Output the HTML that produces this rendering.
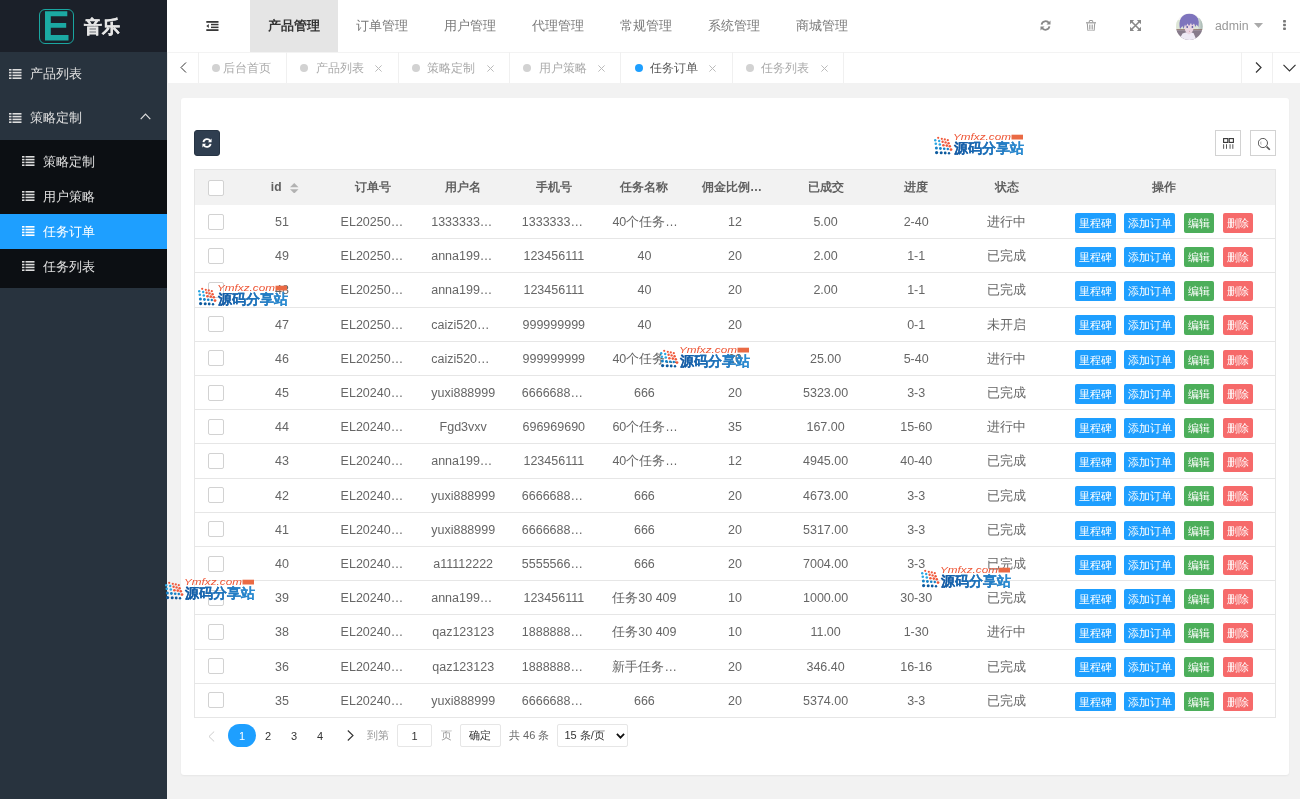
<!DOCTYPE html>
<html><head><meta charset="utf-8">
<style>
*{margin:0;padding:0;box-sizing:border-box;}
html,body{width:1300px;height:799px;overflow:hidden;background:#f2f2f2;font-family:"Liberation Sans",sans-serif;color:#666;}
div,span{position:absolute;}
svg{position:absolute;display:block;}
#side{left:0;top:0;width:167px;height:799px;background:#28333e;}
#logo{left:0;top:0;width:167px;height:52px;background:#1b2029;}
#lbox{left:38.5px;top:9px;width:35.5px;height:35px;border:1px solid #1aa6a0;border-radius:6px;}
#ltxt{left:84px;top:13.5px;font-size:17.5px;font-weight:bold;color:#e6e6e6;-webkit-text-stroke:0.3px #e6e6e6;line-height:26px;white-space:nowrap;}
.mi{left:0;width:167px;height:44px;color:#e0e0e0;font-size:13px;line-height:44px;white-space:nowrap;}
.mi .t{left:30px;top:0;}
.mi svg{left:8.5px;top:16.5px;}
#sub{left:0;top:140px;width:167px;height:148px;background:#0c0f13;}
.si{left:0;width:167px;height:35px;color:#e0e0e0;font-size:13px;line-height:35px;white-space:nowrap;}
.si .t{left:43px;top:0;}
.si svg{left:22px;top:12px;}
.si.act{background:#1e9fff;color:#fff;}
#head{left:167px;top:0;width:1133px;height:52px;background:#fff;}
.hm{top:0;height:52px;width:88px;text-align:center;line-height:52.5px;font-size:12.8px;color:#7a7a7a;white-space:nowrap;}
.hm.act{background:#e5e5e5;color:#333;font-weight:bold;}
#tabs{left:167px;top:52px;width:1133px;height:31px;background:#fff;border-top:1px solid #f3f3f3;}
.tb{top:52px;height:31px;border-left:1px solid #f0f0f0;font-size:12.4px;color:#aaa;line-height:32px;white-space:nowrap;}
.tb .dot{top:12px;width:8px;height:8px;border-radius:50%;background:#d2d2d2;}
.tb .x{top:12px;}
#card{left:181px;top:98px;width:1108px;height:677px;background:#fff;border-radius:3px;box-shadow:0 1px 2px rgba(0,0,0,.05);}
.th{height:35px;line-height:37px;text-align:center;font-size:12px;color:#606060;font-weight:bold;white-space:nowrap;}
.td{height:34.2px;line-height:36.4px;text-align:center;font-size:12.5px;color:#666;white-space:nowrap;}
#thead{left:194px;top:169px;width:1082px;height:36px;background:#f2f2f2;border:1px solid #e6e6e6;border-bottom:none;}
#tframe{left:194px;top:169px;width:1082px;height:549px;border:1px solid #e6e6e6;}
.rl{left:194px;width:1082px;height:1px;background:#e6e6e6;}
.cb{width:16px;height:16px;border:1px solid #d2d2d2;border-radius:2px;background:#fff;}
.sort{left:0;top:0;}
.ops{left:0;top:0;width:0;height:0;}
.b{top:0;height:19.8px;line-height:20px;font-size:10.8px;font-weight:normal;color:#fff;text-align:center;border-radius:2px;white-space:nowrap;}
.bl{background:#1e9fff;}
.gr{background:#4cae5a;}
.rd{background:#f66a6a;}
.wm{width:92px;height:25px;}
</style></head>
<body style="will-change:transform">
<div id="side">
  <div id="logo">
    <div id="lbox"></div>
    <svg style="left:45px;top:11px" width="24" height="30" viewBox="0 0 24 30"><path d="M0 0.2H22.3V5.2H5.8V12H21.2V16.7H5.8V24H23.5V29.4H0Z" fill="#1ba9a3"/></svg>
    <div id="ltxt">音乐</div>
  </div>
  <div class="mi" style="top:52px"><svg width="13" height="10" viewBox="0 0 13 10"><g fill="#ddd"><rect x="0" y="0" width="2.5" height="1.6"/><rect x="3.5" y="0" width="9" height="1.6"/><rect x="0" y="2.8" width="2.5" height="1.6"/><rect x="3.5" y="2.8" width="9" height="1.6"/><rect x="0" y="5.6" width="2.5" height="1.6"/><rect x="3.5" y="5.6" width="9" height="1.6"/><rect x="0" y="8.4" width="2.5" height="1.6"/><rect x="3.5" y="8.4" width="9" height="1.6"/></g></svg><span class="t">产品列表</span></div>
  <div class="mi" style="top:96px"><svg width="13" height="10" viewBox="0 0 13 10"><g fill="#ddd"><rect x="0" y="0" width="2.5" height="1.6"/><rect x="3.5" y="0" width="9" height="1.6"/><rect x="0" y="2.8" width="2.5" height="1.6"/><rect x="3.5" y="2.8" width="9" height="1.6"/><rect x="0" y="5.6" width="2.5" height="1.6"/><rect x="3.5" y="5.6" width="9" height="1.6"/><rect x="0" y="8.4" width="2.5" height="1.6"/><rect x="3.5" y="8.4" width="9" height="1.6"/></g></svg><span class="t">策略定制</span>
    <svg style="left:139.5px;top:17px" width="11" height="7" viewBox="0 0 11 7"><path d="M0.7 6.2L5.5 1.2L10.3 6.2" fill="none" stroke="#ddd" stroke-width="1.2"/></svg>
  </div>
  <div id="sub">
    <div class="si" style="top:4px"><svg width="13" height="10" viewBox="0 0 13 10"><g fill="#ddd"><rect x="0" y="0" width="2.5" height="1.6"/><rect x="3.5" y="0" width="9" height="1.6"/><rect x="0" y="2.8" width="2.5" height="1.6"/><rect x="3.5" y="2.8" width="9" height="1.6"/><rect x="0" y="5.6" width="2.5" height="1.6"/><rect x="3.5" y="5.6" width="9" height="1.6"/><rect x="0" y="8.4" width="2.5" height="1.6"/><rect x="3.5" y="8.4" width="9" height="1.6"/></g></svg><span class="t">策略定制</span></div>
    <div class="si" style="top:39px"><svg width="13" height="10" viewBox="0 0 13 10"><g fill="#ddd"><rect x="0" y="0" width="2.5" height="1.6"/><rect x="3.5" y="0" width="9" height="1.6"/><rect x="0" y="2.8" width="2.5" height="1.6"/><rect x="3.5" y="2.8" width="9" height="1.6"/><rect x="0" y="5.6" width="2.5" height="1.6"/><rect x="3.5" y="5.6" width="9" height="1.6"/><rect x="0" y="8.4" width="2.5" height="1.6"/><rect x="3.5" y="8.4" width="9" height="1.6"/></g></svg><span class="t">用户策略</span></div>
    <div class="si act" style="top:74px"><svg width="13" height="10" viewBox="0 0 13 10"><g fill="#fff"><rect x="0" y="0" width="2.5" height="1.6"/><rect x="3.5" y="0" width="9" height="1.6"/><rect x="0" y="2.8" width="2.5" height="1.6"/><rect x="3.5" y="2.8" width="9" height="1.6"/><rect x="0" y="5.6" width="2.5" height="1.6"/><rect x="3.5" y="5.6" width="9" height="1.6"/><rect x="0" y="8.4" width="2.5" height="1.6"/><rect x="3.5" y="8.4" width="9" height="1.6"/></g></svg><span class="t">任务订单</span></div>
    <div class="si" style="top:109px"><svg width="13" height="10" viewBox="0 0 13 10"><g fill="#ddd"><rect x="0" y="0" width="2.5" height="1.6"/><rect x="3.5" y="0" width="9" height="1.6"/><rect x="0" y="2.8" width="2.5" height="1.6"/><rect x="3.5" y="2.8" width="9" height="1.6"/><rect x="0" y="5.6" width="2.5" height="1.6"/><rect x="3.5" y="5.6" width="9" height="1.6"/><rect x="0" y="8.4" width="2.5" height="1.6"/><rect x="3.5" y="8.4" width="9" height="1.6"/></g></svg><span class="t">任务列表</span></div>
  </div>
</div>

<div id="head">
  <svg style="left:38.5px;top:21px" width="13" height="10" viewBox="0 0 13 10"><g fill="#383838"><rect x="0.3" y="0" width="12.2" height="1.8"/><rect x="5" y="2.8" width="7.5" height="1.5"/><rect x="5" y="5.6" width="7.5" height="1.5"/><rect x="0.3" y="8.2" width="12.2" height="1.8"/><path d="M2.8 3L0.3 5L2.8 7Z"/></g></svg>
  <div class="hm act" style="left:83px">产品管理</div>
  <div class="hm" style="left:171px">订单管理</div>
  <div class="hm" style="left:259px">用户管理</div>
  <div class="hm" style="left:347px">代理管理</div>
  <div class="hm" style="left:435px">常规管理</div>
  <div class="hm" style="left:523px">系统管理</div>
  <div class="hm" style="left:611px">商城管理</div>
  <!-- refresh -->
  <svg style="left:873px;top:19.5px" width="11" height="11" viewBox="0 0 11 11"><g fill="none" stroke="#888" stroke-width="1.8"><path d="M1.6 4.6A4 4 0 0 1 9 3.2"/><path d="M9.4 6.4A4 4 0 0 1 2 7.8"/></g><path d="M10.5 0.6V4.6H6.5Z" fill="#888"/><path d="M0.5 10.4V6.4H4.5Z" fill="#888"/></svg>
  <!-- trash -->
  <svg style="left:918.5px;top:19.5px" width="10" height="11.5" viewBox="0 0 10 11.5"><g fill="none" stroke="#999" stroke-width="1"><path d="M3.3 2.2V0.9Q3.3 0.5 3.8 0.5H6.2Q6.7 0.5 6.7 0.9V2.2"/><path d="M1.3 3.3L1.8 10.3Q1.9 11 2.6 11H7.4Q8.1 11 8.2 10.3L8.7 3.3"/></g><rect x="0" y="2.2" width="10" height="1.2" fill="#999"/><g fill="#aaa"><rect x="3" y="4.6" width="0.9" height="5"/><rect x="4.55" y="4.6" width="0.9" height="5"/><rect x="6.1" y="4.6" width="0.9" height="5"/></g></svg>
  <!-- fullscreen -->
  <svg style="left:963px;top:19.5px" width="11" height="11" viewBox="0 0 11 11"><g fill="#888"><path d="M0 0H4.2L0 4.2Z"/><path d="M11 0H6.8L11 4.2Z"/><path d="M0 11H4.2L0 6.8Z"/><path d="M11 11H6.8L11 6.8Z"/></g><g stroke="#888" stroke-width="1.6"><path d="M1.5 1.5L9.5 9.5M9.5 1.5L1.5 9.5"/></g></svg>
  <!-- avatar -->
  <svg style="left:1009.2px;top:12.6px" width="27" height="27" viewBox="0 0 27 27"><defs><clipPath id="avc"><circle cx="13.3" cy="13.6" r="13.3"/></clipPath><linearGradient id="avr" x1="0" x2="1"><stop offset="0" stop-color="#e4ebe0"/><stop offset="1" stop-color="#9fb0ae"/></linearGradient></defs><g clip-path="url(#avc)"><rect width="27" height="27" fill="#f6f6f4"/><rect y="7" width="27" height="9.5" fill="#dde6d6"/><rect x="21" y="5" width="6" height="11.5" fill="url(#avr)"/><rect y="16.3" width="27" height="0.9" fill="#7d5b52"/><rect y="17.2" width="27" height="10" fill="#877b8b"/><path d="M3 27L6.5 20.5Q12 18.5 17.5 20L20.5 27Z" fill="#eeeaf5"/><path d="M8.5 11Q8 20 13 21.5Q17.5 20.5 18.5 11Z" fill="#ead5e2"/><path d="M4 16Q2.5 9 5 5Q8.5 0.5 13.5 0.8Q19.5 1 22 5.5Q23.5 9 22.5 14L20.5 11.5L19.5 14L18 10.5L16 12.5L15 10L13 13L11.5 10.5L10 13.5L9 11.5L7.5 16L6.5 13Z" fill="#7e74bd"/><circle cx="11.2" cy="14" r="0.9" fill="#5d5fa0"/><circle cx="16.4" cy="14" r="0.9" fill="#5d5fa0"/><path d="M13.2 18.2L14 18.6" stroke="#c77b8a" stroke-width="0.7"/></g></svg>
  <span style="left:1048px;top:0;line-height:52px;font-size:12.3px;color:#999;">admin</span>
  <svg style="left:1086.5px;top:23px" width="9" height="5" viewBox="0 0 9 5"><path d="M0 0H9L4.5 5Z" fill="#aaa"/></svg>
  <svg style="left:1116px;top:20px" width="3" height="10" viewBox="0 0 3 10"><g fill="#777"><rect x="0.1" y="0.1" width="2.8" height="2.4" rx="0.6"/><rect x="0.1" y="3.8" width="2.8" height="2.4" rx="0.6"/><rect x="0.1" y="7.5" width="2.8" height="2.4" rx="0.6"/></g></svg>
</div>

<div id="tabs"></div>
<div class="tb" style="left:167px;width:32px;"><svg style="left:11.8px;top:10px" width="7" height="11" viewBox="0 0 7 11"><path d="M6 0.5L1 5.5L6 10.5" fill="none" stroke="#333" stroke-width="1"/></svg></div>
<div class="tb" style="left:198px;width:88px;"><span class="dot" style="left:12.8px"></span><span style="left:24.2px">后台首页</span></div>
<div class="tb" style="left:286px;width:111.5px;"><span class="dot" style="left:13.2px"></span><span style="left:28.9px">产品列表</span><svg class="x" style="left:88px;top:12.8px" width="7" height="7" viewBox="0 0 7 7"><path d="M0.4 0.4L6.6 6.6M6.6 0.4L0.4 6.6" stroke="#bbb" stroke-width="1"/></svg></div>
<div class="tb" style="left:397.5px;width:111.5px;"><span class="dot" style="left:13.2px"></span><span style="left:28.9px">策略定制</span><svg class="x" style="left:88px;top:12.8px" width="7" height="7" viewBox="0 0 7 7"><path d="M0.4 0.4L6.6 6.6M6.6 0.4L0.4 6.6" stroke="#bbb" stroke-width="1"/></svg></div>
<div class="tb" style="left:509px;width:111.5px;"><span class="dot" style="left:13.2px"></span><span style="left:28.9px">用户策略</span><svg class="x" style="left:88px;top:12.8px" width="7" height="7" viewBox="0 0 7 7"><path d="M0.4 0.4L6.6 6.6M6.6 0.4L0.4 6.6" stroke="#bbb" stroke-width="1"/></svg></div>
<div class="tb" style="left:620.3px;width:111.5px;color:#555;"><span class="dot" style="left:14.2px;background:#1e9fff"></span><span style="left:28.9px">任务订单</span><svg class="x" style="left:88px;top:12.8px" width="7" height="7" viewBox="0 0 7 7"><path d="M0.4 0.4L6.6 6.6M6.6 0.4L0.4 6.6" stroke="#bbb" stroke-width="1"/></svg></div>
<div class="tb" style="left:731.6px;width:111.5px;"><span class="dot" style="left:13.2px"></span><span style="left:28.9px">任务列表</span><svg class="x" style="left:88px;top:12.8px" width="7" height="7" viewBox="0 0 7 7"><path d="M0.4 0.4L6.6 6.6M6.6 0.4L0.4 6.6" stroke="#bbb" stroke-width="1"/></svg></div>
<div class="tb" style="left:843px;width:1px;"></div>
<div class="tb" style="left:1241px;width:31px;"><svg style="left:13px;top:10px" width="7" height="11" viewBox="0 0 7 11"><path d="M1 0.5L6 5.5L1 10.5" fill="none" stroke="#333" stroke-width="1.2"/></svg></div>
<div class="tb" style="left:1272px;width:28px;"><svg style="left:9.5px;top:11.5px" width="13" height="8" viewBox="0 0 13 8"><path d="M0.5 0.8L6.5 6.8L12.5 0.8" fill="none" stroke="#333" stroke-width="1.2"/></svg></div>

<div id="card"></div>
<div style="left:194px;top:130px;width:26px;height:26px;background:#2f3e50;border:1px solid #263444;border-radius:3px;"><svg style="left:7px;top:7px" width="10" height="10" viewBox="0 0 11 11"><g fill="none" stroke="#fff" stroke-width="2"><path d="M1.6 4.6A4 4 0 0 1 9 3.2"/><path d="M9.4 6.4A4 4 0 0 1 2 7.8"/></g><path d="M10.5 0.6V4.6H6.5Z" fill="#fff"/><path d="M0.5 10.4V6.4H4.5Z" fill="#fff"/></svg></div>
<div style="left:1215px;top:130px;width:26px;height:26px;border:1px solid #d2d2d2;"><svg style="left:7px;top:7px" width="11" height="11" viewBox="0 0 11 11"><g fill="none" stroke="#333" stroke-width="1.1"><rect x="0.6" y="0.6" width="4.2" height="3.8"/><rect x="6.2" y="0.6" width="4.2" height="3.8"/></g><g fill="#444"><rect x="0.2" y="6.2" width="0.9" height="4.6"/><rect x="3" y="6.2" width="0.9" height="4.6"/><rect x="6.6" y="6.2" width="0.9" height="4.6"/><rect x="9.4" y="6.2" width="0.9" height="4.6"/></g></svg></div>
<div style="left:1250px;top:130px;width:26px;height:26px;border:1px solid #d2d2d2;"><svg style="left:6.5px;top:6.5px" width="13" height="13" viewBox="0 0 13 13"><circle cx="4.9" cy="5.0" r="4.6" fill="none" stroke="#444" stroke-width="0.9"/><path d="M3 3.6Q2.3 5 3.2 6.6" fill="none" stroke="#777" stroke-width="0.6"/><path d="M8.6 8.6L11.8 11.8" stroke="#555" stroke-width="1.6"/></svg></div>
<div id="tframe"></div>
<div id="thead"></div>
<div class="cb" style="left:208px;top:180px"></div>
<span class="th" style="left:270.8px;top:169px;font-weight:bold;font-family:'Liberation Sans'">id</span>
<svg style="left:290px;top:182.5px" width="8.5" height="10.5" viewBox="0 0 8.5 10.5"><path d="M4.25 0L8.5 4.2H0Z" fill="#b2b2b2"/><path d="M0 6.2H8.5L4.25 10.5Z" fill="#b2b2b2"/></svg>
<div class="th" style="left:327.3px;top:169px;width:90.6px">订单号</div>
<div class="th" style="left:417.9px;top:169px;width:90.6px">用户名</div>
<div class="th" style="left:508.5px;top:169px;width:90.6px">手机号</div>
<div class="th" style="left:599.1px;top:169px;width:90.6px">任务名称</div>
<div class="th" style="left:702.0px;top:169px;text-align:left">佣金比例…</div>
<div class="th" style="left:780.3px;top:169px;width:90.6px">已成交</div>
<div class="th" style="left:870.9px;top:169px;width:90.6px">进度</div>
<div class="th" style="left:961.5px;top:169px;width:90.6px">状态</div>
<div class="th" style="left:1052.1px;top:169px;width:223.9px">操作</div>
<div class="rl" style="top:238px"></div>
<div class="cb" style="left:208px;top:213.5px"></div>
<div class="td" style="left:236.7px;top:204.0px;width:90.6px">51</div>
<div class="td" style="left:340.6px;top:204.0px;text-align:left">EL20250…</div>
<div class="td" style="left:431.2px;top:204.0px;text-align:left">1333333…</div>
<div class="td" style="left:521.8px;top:204.0px;text-align:left">1333333…</div>
<div class="td" style="left:612.4px;top:204.0px;text-align:left">40个任务…</div>
<div class="td" style="left:689.7px;top:204.0px;width:90.6px">12</div>
<div class="td" style="left:780.3px;top:204.0px;width:90.6px">5.00</div>
<div class="td" style="left:870.9px;top:204.0px;width:90.6px">2-40</div>
<div class="td" style="left:961.5px;top:204.0px;width:90.6px">进行中</div>
<div class="ops" style="top:212.8px"><span class="b bl" style="left:1075px;width:40.5px">里程碑</span><span class="b bl" style="left:1124px;width:51px">添加订单</span><span class="b gr" style="left:1184px;width:30px">编辑</span><span class="b rd" style="left:1223px;width:29.7px">删除</span></div>
<div class="rl" style="top:272px"></div>
<div class="cb" style="left:208px;top:247.7px"></div>
<div class="td" style="left:236.7px;top:238.2px;width:90.6px">49</div>
<div class="td" style="left:340.6px;top:238.2px;text-align:left">EL20250…</div>
<div class="td" style="left:431.2px;top:238.2px;text-align:left">anna199…</div>
<div class="td" style="left:508.5px;top:238.2px;width:90.6px">123456111</div>
<div class="td" style="left:599.1px;top:238.2px;width:90.6px">40</div>
<div class="td" style="left:689.7px;top:238.2px;width:90.6px">20</div>
<div class="td" style="left:780.3px;top:238.2px;width:90.6px">2.00</div>
<div class="td" style="left:870.9px;top:238.2px;width:90.6px">1-1</div>
<div class="td" style="left:961.5px;top:238.2px;width:90.6px">已完成</div>
<div class="ops" style="top:247.0px"><span class="b bl" style="left:1075px;width:40.5px">里程碑</span><span class="b bl" style="left:1124px;width:51px">添加订单</span><span class="b gr" style="left:1184px;width:30px">编辑</span><span class="b rd" style="left:1223px;width:29.7px">删除</span></div>
<div class="rl" style="top:307px"></div>
<div class="cb" style="left:208px;top:281.9px"></div>
<div class="td" style="left:236.7px;top:272.4px;width:90.6px">48</div>
<div class="td" style="left:340.6px;top:272.4px;text-align:left">EL20250…</div>
<div class="td" style="left:431.2px;top:272.4px;text-align:left">anna199…</div>
<div class="td" style="left:508.5px;top:272.4px;width:90.6px">123456111</div>
<div class="td" style="left:599.1px;top:272.4px;width:90.6px">40</div>
<div class="td" style="left:689.7px;top:272.4px;width:90.6px">20</div>
<div class="td" style="left:780.3px;top:272.4px;width:90.6px">2.00</div>
<div class="td" style="left:870.9px;top:272.4px;width:90.6px">1-1</div>
<div class="td" style="left:961.5px;top:272.4px;width:90.6px">已完成</div>
<div class="ops" style="top:281.2px"><span class="b bl" style="left:1075px;width:40.5px">里程碑</span><span class="b bl" style="left:1124px;width:51px">添加订单</span><span class="b gr" style="left:1184px;width:30px">编辑</span><span class="b rd" style="left:1223px;width:29.7px">删除</span></div>
<div class="rl" style="top:341px"></div>
<div class="cb" style="left:208px;top:316.1px"></div>
<div class="td" style="left:236.7px;top:306.6px;width:90.6px">47</div>
<div class="td" style="left:340.6px;top:306.6px;text-align:left">EL20250…</div>
<div class="td" style="left:431.2px;top:306.6px;text-align:left">caizi520…</div>
<div class="td" style="left:508.5px;top:306.6px;width:90.6px">999999999</div>
<div class="td" style="left:599.1px;top:306.6px;width:90.6px">40</div>
<div class="td" style="left:689.7px;top:306.6px;width:90.6px">20</div>
<div class="td" style="left:780.3px;top:306.6px;width:90.6px"></div>
<div class="td" style="left:870.9px;top:306.6px;width:90.6px">0-1</div>
<div class="td" style="left:961.5px;top:306.6px;width:90.6px">未开启</div>
<div class="ops" style="top:315.4px"><span class="b bl" style="left:1075px;width:40.5px">里程碑</span><span class="b bl" style="left:1124px;width:51px">添加订单</span><span class="b gr" style="left:1184px;width:30px">编辑</span><span class="b rd" style="left:1223px;width:29.7px">删除</span></div>
<div class="rl" style="top:375px"></div>
<div class="cb" style="left:208px;top:350.3px"></div>
<div class="td" style="left:236.7px;top:340.8px;width:90.6px">46</div>
<div class="td" style="left:340.6px;top:340.8px;text-align:left">EL20250…</div>
<div class="td" style="left:431.2px;top:340.8px;text-align:left">caizi520…</div>
<div class="td" style="left:508.5px;top:340.8px;width:90.6px">999999999</div>
<div class="td" style="left:612.4px;top:340.8px;text-align:left">40个任务…</div>
<div class="td" style="left:689.7px;top:340.8px;width:90.6px">20</div>
<div class="td" style="left:780.3px;top:340.8px;width:90.6px">25.00</div>
<div class="td" style="left:870.9px;top:340.8px;width:90.6px">5-40</div>
<div class="td" style="left:961.5px;top:340.8px;width:90.6px">进行中</div>
<div class="ops" style="top:349.6px"><span class="b bl" style="left:1075px;width:40.5px">里程碑</span><span class="b bl" style="left:1124px;width:51px">添加订单</span><span class="b gr" style="left:1184px;width:30px">编辑</span><span class="b rd" style="left:1223px;width:29.7px">删除</span></div>
<div class="rl" style="top:409px"></div>
<div class="cb" style="left:208px;top:384.5px"></div>
<div class="td" style="left:236.7px;top:375.0px;width:90.6px">45</div>
<div class="td" style="left:340.6px;top:375.0px;text-align:left">EL20240…</div>
<div class="td" style="left:417.9px;top:375.0px;width:90.6px">yuxi888999</div>
<div class="td" style="left:521.8px;top:375.0px;text-align:left">6666688…</div>
<div class="td" style="left:599.1px;top:375.0px;width:90.6px">666</div>
<div class="td" style="left:689.7px;top:375.0px;width:90.6px">20</div>
<div class="td" style="left:780.3px;top:375.0px;width:90.6px">5323.00</div>
<div class="td" style="left:870.9px;top:375.0px;width:90.6px">3-3</div>
<div class="td" style="left:961.5px;top:375.0px;width:90.6px">已完成</div>
<div class="ops" style="top:383.8px"><span class="b bl" style="left:1075px;width:40.5px">里程碑</span><span class="b bl" style="left:1124px;width:51px">添加订单</span><span class="b gr" style="left:1184px;width:30px">编辑</span><span class="b rd" style="left:1223px;width:29.7px">删除</span></div>
<div class="rl" style="top:443px"></div>
<div class="cb" style="left:208px;top:418.7px"></div>
<div class="td" style="left:236.7px;top:409.2px;width:90.6px">44</div>
<div class="td" style="left:340.6px;top:409.2px;text-align:left">EL20240…</div>
<div class="td" style="left:417.9px;top:409.2px;width:90.6px">Fgd3vxv</div>
<div class="td" style="left:508.5px;top:409.2px;width:90.6px">696969690</div>
<div class="td" style="left:612.4px;top:409.2px;text-align:left">60个任务…</div>
<div class="td" style="left:689.7px;top:409.2px;width:90.6px">35</div>
<div class="td" style="left:780.3px;top:409.2px;width:90.6px">167.00</div>
<div class="td" style="left:870.9px;top:409.2px;width:90.6px">15-60</div>
<div class="td" style="left:961.5px;top:409.2px;width:90.6px">进行中</div>
<div class="ops" style="top:418.0px"><span class="b bl" style="left:1075px;width:40.5px">里程碑</span><span class="b bl" style="left:1124px;width:51px">添加订单</span><span class="b gr" style="left:1184px;width:30px">编辑</span><span class="b rd" style="left:1223px;width:29.7px">删除</span></div>
<div class="rl" style="top:478px"></div>
<div class="cb" style="left:208px;top:452.9px"></div>
<div class="td" style="left:236.7px;top:443.4px;width:90.6px">43</div>
<div class="td" style="left:340.6px;top:443.4px;text-align:left">EL20240…</div>
<div class="td" style="left:431.2px;top:443.4px;text-align:left">anna199…</div>
<div class="td" style="left:508.5px;top:443.4px;width:90.6px">123456111</div>
<div class="td" style="left:612.4px;top:443.4px;text-align:left">40个任务…</div>
<div class="td" style="left:689.7px;top:443.4px;width:90.6px">12</div>
<div class="td" style="left:780.3px;top:443.4px;width:90.6px">4945.00</div>
<div class="td" style="left:870.9px;top:443.4px;width:90.6px">40-40</div>
<div class="td" style="left:961.5px;top:443.4px;width:90.6px">已完成</div>
<div class="ops" style="top:452.2px"><span class="b bl" style="left:1075px;width:40.5px">里程碑</span><span class="b bl" style="left:1124px;width:51px">添加订单</span><span class="b gr" style="left:1184px;width:30px">编辑</span><span class="b rd" style="left:1223px;width:29.7px">删除</span></div>
<div class="rl" style="top:512px"></div>
<div class="cb" style="left:208px;top:487.1px"></div>
<div class="td" style="left:236.7px;top:477.6px;width:90.6px">42</div>
<div class="td" style="left:340.6px;top:477.6px;text-align:left">EL20240…</div>
<div class="td" style="left:417.9px;top:477.6px;width:90.6px">yuxi888999</div>
<div class="td" style="left:521.8px;top:477.6px;text-align:left">6666688…</div>
<div class="td" style="left:599.1px;top:477.6px;width:90.6px">666</div>
<div class="td" style="left:689.7px;top:477.6px;width:90.6px">20</div>
<div class="td" style="left:780.3px;top:477.6px;width:90.6px">4673.00</div>
<div class="td" style="left:870.9px;top:477.6px;width:90.6px">3-3</div>
<div class="td" style="left:961.5px;top:477.6px;width:90.6px">已完成</div>
<div class="ops" style="top:486.4px"><span class="b bl" style="left:1075px;width:40.5px">里程碑</span><span class="b bl" style="left:1124px;width:51px">添加订单</span><span class="b gr" style="left:1184px;width:30px">编辑</span><span class="b rd" style="left:1223px;width:29.7px">删除</span></div>
<div class="rl" style="top:546px"></div>
<div class="cb" style="left:208px;top:521.3px"></div>
<div class="td" style="left:236.7px;top:511.8px;width:90.6px">41</div>
<div class="td" style="left:340.6px;top:511.8px;text-align:left">EL20240…</div>
<div class="td" style="left:417.9px;top:511.8px;width:90.6px">yuxi888999</div>
<div class="td" style="left:521.8px;top:511.8px;text-align:left">6666688…</div>
<div class="td" style="left:599.1px;top:511.8px;width:90.6px">666</div>
<div class="td" style="left:689.7px;top:511.8px;width:90.6px">20</div>
<div class="td" style="left:780.3px;top:511.8px;width:90.6px">5317.00</div>
<div class="td" style="left:870.9px;top:511.8px;width:90.6px">3-3</div>
<div class="td" style="left:961.5px;top:511.8px;width:90.6px">已完成</div>
<div class="ops" style="top:520.6px"><span class="b bl" style="left:1075px;width:40.5px">里程碑</span><span class="b bl" style="left:1124px;width:51px">添加订单</span><span class="b gr" style="left:1184px;width:30px">编辑</span><span class="b rd" style="left:1223px;width:29.7px">删除</span></div>
<div class="rl" style="top:580px"></div>
<div class="cb" style="left:208px;top:555.5px"></div>
<div class="td" style="left:236.7px;top:546.0px;width:90.6px">40</div>
<div class="td" style="left:340.6px;top:546.0px;text-align:left">EL20240…</div>
<div class="td" style="left:417.9px;top:546.0px;width:90.6px">a11112222</div>
<div class="td" style="left:521.8px;top:546.0px;text-align:left">5555566…</div>
<div class="td" style="left:599.1px;top:546.0px;width:90.6px">666</div>
<div class="td" style="left:689.7px;top:546.0px;width:90.6px">20</div>
<div class="td" style="left:780.3px;top:546.0px;width:90.6px">7004.00</div>
<div class="td" style="left:870.9px;top:546.0px;width:90.6px">3-3</div>
<div class="td" style="left:961.5px;top:546.0px;width:90.6px">已完成</div>
<div class="ops" style="top:554.8px"><span class="b bl" style="left:1075px;width:40.5px">里程碑</span><span class="b bl" style="left:1124px;width:51px">添加订单</span><span class="b gr" style="left:1184px;width:30px">编辑</span><span class="b rd" style="left:1223px;width:29.7px">删除</span></div>
<div class="rl" style="top:614px"></div>
<div class="cb" style="left:208px;top:589.7px"></div>
<div class="td" style="left:236.7px;top:580.2px;width:90.6px">39</div>
<div class="td" style="left:340.6px;top:580.2px;text-align:left">EL20240…</div>
<div class="td" style="left:431.2px;top:580.2px;text-align:left">anna199…</div>
<div class="td" style="left:508.5px;top:580.2px;width:90.6px">123456111</div>
<div class="td" style="left:599.1px;top:580.2px;width:90.6px">任务30 409</div>
<div class="td" style="left:689.7px;top:580.2px;width:90.6px">10</div>
<div class="td" style="left:780.3px;top:580.2px;width:90.6px">1000.00</div>
<div class="td" style="left:870.9px;top:580.2px;width:90.6px">30-30</div>
<div class="td" style="left:961.5px;top:580.2px;width:90.6px">已完成</div>
<div class="ops" style="top:589.0px"><span class="b bl" style="left:1075px;width:40.5px">里程碑</span><span class="b bl" style="left:1124px;width:51px">添加订单</span><span class="b gr" style="left:1184px;width:30px">编辑</span><span class="b rd" style="left:1223px;width:29.7px">删除</span></div>
<div class="rl" style="top:649px"></div>
<div class="cb" style="left:208px;top:623.9px"></div>
<div class="td" style="left:236.7px;top:614.4px;width:90.6px">38</div>
<div class="td" style="left:340.6px;top:614.4px;text-align:left">EL20240…</div>
<div class="td" style="left:417.9px;top:614.4px;width:90.6px">qaz123123</div>
<div class="td" style="left:521.8px;top:614.4px;text-align:left">1888888…</div>
<div class="td" style="left:599.1px;top:614.4px;width:90.6px">任务30 409</div>
<div class="td" style="left:689.7px;top:614.4px;width:90.6px">10</div>
<div class="td" style="left:780.3px;top:614.4px;width:90.6px">11.00</div>
<div class="td" style="left:870.9px;top:614.4px;width:90.6px">1-30</div>
<div class="td" style="left:961.5px;top:614.4px;width:90.6px">进行中</div>
<div class="ops" style="top:623.2px"><span class="b bl" style="left:1075px;width:40.5px">里程碑</span><span class="b bl" style="left:1124px;width:51px">添加订单</span><span class="b gr" style="left:1184px;width:30px">编辑</span><span class="b rd" style="left:1223px;width:29.7px">删除</span></div>
<div class="rl" style="top:683px"></div>
<div class="cb" style="left:208px;top:658.1px"></div>
<div class="td" style="left:236.7px;top:648.6px;width:90.6px">36</div>
<div class="td" style="left:340.6px;top:648.6px;text-align:left">EL20240…</div>
<div class="td" style="left:417.9px;top:648.6px;width:90.6px">qaz123123</div>
<div class="td" style="left:521.8px;top:648.6px;text-align:left">1888888…</div>
<div class="td" style="left:612.4px;top:648.6px;text-align:left">新手任务…</div>
<div class="td" style="left:689.7px;top:648.6px;width:90.6px">20</div>
<div class="td" style="left:780.3px;top:648.6px;width:90.6px">346.40</div>
<div class="td" style="left:870.9px;top:648.6px;width:90.6px">16-16</div>
<div class="td" style="left:961.5px;top:648.6px;width:90.6px">已完成</div>
<div class="ops" style="top:657.4px"><span class="b bl" style="left:1075px;width:40.5px">里程碑</span><span class="b bl" style="left:1124px;width:51px">添加订单</span><span class="b gr" style="left:1184px;width:30px">编辑</span><span class="b rd" style="left:1223px;width:29.7px">删除</span></div>
<div class="rl" style="top:717px"></div>
<div class="cb" style="left:208px;top:692.3px"></div>
<div class="td" style="left:236.7px;top:682.8px;width:90.6px">35</div>
<div class="td" style="left:340.6px;top:682.8px;text-align:left">EL20240…</div>
<div class="td" style="left:417.9px;top:682.8px;width:90.6px">yuxi888999</div>
<div class="td" style="left:521.8px;top:682.8px;text-align:left">6666688…</div>
<div class="td" style="left:599.1px;top:682.8px;width:90.6px">666</div>
<div class="td" style="left:689.7px;top:682.8px;width:90.6px">20</div>
<div class="td" style="left:780.3px;top:682.8px;width:90.6px">5374.00</div>
<div class="td" style="left:870.9px;top:682.8px;width:90.6px">3-3</div>
<div class="td" style="left:961.5px;top:682.8px;width:90.6px">已完成</div>
<div class="ops" style="top:691.6px"><span class="b bl" style="left:1075px;width:40.5px">里程碑</span><span class="b bl" style="left:1124px;width:51px">添加订单</span><span class="b gr" style="left:1184px;width:30px">编辑</span><span class="b rd" style="left:1223px;width:29.7px">删除</span></div><!-- pagination -->
<svg style="left:208px;top:730.5px" width="7" height="11" viewBox="0 0 7 11"><path d="M6.2 0.5L1 5.5L6.2 10.5" fill="none" stroke="#ccc" stroke-width="1"/></svg>
<div style="left:228px;top:724px;width:28px;height:23px;border-radius:11.5px;background:#1e9fff;color:#fff;font-size:11px;line-height:24px;text-align:center;">1</div>
<span style="left:263px;top:724px;width:10px;text-align:center;line-height:24px;font-size:11px;color:#333;">2</span>
<span style="left:289px;top:724px;width:10px;text-align:center;line-height:24px;font-size:11px;color:#333;">3</span>
<span style="left:315px;top:724px;width:10px;text-align:center;line-height:24px;font-size:11px;color:#333;">4</span>
<svg style="left:347px;top:730px" width="7" height="11" viewBox="0 0 7 11"><path d="M0.8 0.5L6 5.5L0.8 10.5" fill="none" stroke="#333" stroke-width="1.1"/></svg>
<span style="left:366.5px;top:724px;line-height:23px;font-size:11px;color:#999;white-space:nowrap">到第</span>
<div style="left:397px;top:724px;width:35px;height:23px;border:1px solid #e6e6e6;border-radius:2px;font-size:11px;color:#333;text-align:center;line-height:22px;">1</div>
<span style="left:440.5px;top:724px;line-height:23px;font-size:11px;color:#999;white-space:nowrap">页</span>
<div style="left:460px;top:724px;width:40.5px;height:22.5px;border:1px solid #e6e6e6;border-radius:2px;font-size:11px;color:#333;text-align:center;line-height:21px;">确定</div>
<span style="left:509px;top:724px;line-height:23px;font-size:11px;color:#666;white-space:nowrap">共 46 条</span>
<div style="left:557px;top:724px;width:70.5px;height:22.5px;border:1px solid #e6e6e6;border-radius:2px;font-size:11px;color:#333;line-height:21px;white-space:nowrap"><span style="left:6.5px;top:0">15 条/页</span><svg style="left:57.5px;top:7.5px" width="9" height="6" viewBox="0 0 9 6"><path d="M0.9 0.9L4.5 4.6L8.1 0.9" fill="none" stroke="#111" stroke-width="1.8"/></svg></div>
<!-- watermarks -->
<svg width="0" height="0" style="left:0;top:0"><defs><linearGradient id="wmg" x1="0" y1="0" x2="1" y2="0"><stop offset="0" stop-color="#1258a2"/><stop offset="1" stop-color="#2b8cd2"/></linearGradient></defs></svg><svg style="left:930.0px;top:130.0px;z-index:5" width="96" height="27" viewBox="0 0 96 27"><circle cx="8.2" cy="7.8" r="1.1" fill="#f0583a"/><circle cx="11.8" cy="8.8" r="1.1" fill="#f0583a"/><circle cx="14.8" cy="9.4" r="1.1" fill="#f0583a"/><circle cx="17.8" cy="10.2" r="1.1" fill="#f0583a"/><circle cx="12.6" cy="11.8" r="1.2" fill="#f0583a"/><circle cx="15.6" cy="12.4" r="1.2" fill="#f0583a"/><circle cx="18.6" cy="13.2" r="1.2" fill="#f0583a"/><circle cx="13.4" cy="15.2" r="1.3" fill="#f0583a"/><circle cx="16.8" cy="15.6" r="1.3" fill="#f0583a"/><circle cx="19.8" cy="16.2" r="1.3" fill="#f0583a"/><circle cx="21.0" cy="19.6" r="1.4" fill="#f0583a"/><circle cx="5.2" cy="10.2" r="1.2" fill="#2aa6e2"/><circle cx="9.2" cy="11.0" r="1.2" fill="#2aa6e2"/><circle cx="5.8" cy="13.8" r="1.3" fill="#2aa6e2"/><circle cx="9.8" cy="14.5" r="1.3" fill="#2aa6e2"/><circle cx="6.4" cy="18.0" r="1.5" fill="#1582c8"/><circle cx="10.4" cy="18.5" r="1.4" fill="#1582c8"/><circle cx="14.2" cy="18.8" r="1.3" fill="#1582c8"/><circle cx="17.8" cy="19.0" r="1.2" fill="#1582c8"/><circle cx="6.6" cy="22.6" r="1.6" fill="#0d5a9e"/><circle cx="11.2" cy="22.8" r="1.5" fill="#0d5a9e"/><circle cx="15.2" cy="23.0" r="1.4" fill="#0d5a9e"/><circle cx="19.0" cy="23.2" r="1.2" fill="#0d5a9e"/><text x="23" y="9.9" font-family="Liberation Sans" font-style="italic" font-size="8.6" fill="#ee5535" textLength="58" lengthAdjust="spacingAndGlyphs">Ymfxz.com</text><rect x="81.5" y="4.7" width="11.5" height="4.8" fill="#ea6a44"/><text x="23.5" y="23.4" font-family="Liberation Sans" style="font-weight:900" font-size="14" fill="url(#wmg)" stroke="url(#wmg)" stroke-width="0.1" textLength="70" lengthAdjust="spacingAndGlyphs">源码分享站</text></svg>
<svg style="left:193.7px;top:281.3px;z-index:5" width="96" height="27" viewBox="0 0 96 27"><circle cx="8.2" cy="7.8" r="1.1" fill="#f0583a"/><circle cx="11.8" cy="8.8" r="1.1" fill="#f0583a"/><circle cx="14.8" cy="9.4" r="1.1" fill="#f0583a"/><circle cx="17.8" cy="10.2" r="1.1" fill="#f0583a"/><circle cx="12.6" cy="11.8" r="1.2" fill="#f0583a"/><circle cx="15.6" cy="12.4" r="1.2" fill="#f0583a"/><circle cx="18.6" cy="13.2" r="1.2" fill="#f0583a"/><circle cx="13.4" cy="15.2" r="1.3" fill="#f0583a"/><circle cx="16.8" cy="15.6" r="1.3" fill="#f0583a"/><circle cx="19.8" cy="16.2" r="1.3" fill="#f0583a"/><circle cx="21.0" cy="19.6" r="1.4" fill="#f0583a"/><circle cx="5.2" cy="10.2" r="1.2" fill="#2aa6e2"/><circle cx="9.2" cy="11.0" r="1.2" fill="#2aa6e2"/><circle cx="5.8" cy="13.8" r="1.3" fill="#2aa6e2"/><circle cx="9.8" cy="14.5" r="1.3" fill="#2aa6e2"/><circle cx="6.4" cy="18.0" r="1.5" fill="#1582c8"/><circle cx="10.4" cy="18.5" r="1.4" fill="#1582c8"/><circle cx="14.2" cy="18.8" r="1.3" fill="#1582c8"/><circle cx="17.8" cy="19.0" r="1.2" fill="#1582c8"/><circle cx="6.6" cy="22.6" r="1.6" fill="#0d5a9e"/><circle cx="11.2" cy="22.8" r="1.5" fill="#0d5a9e"/><circle cx="15.2" cy="23.0" r="1.4" fill="#0d5a9e"/><circle cx="19.0" cy="23.2" r="1.2" fill="#0d5a9e"/><text x="23" y="9.9" font-family="Liberation Sans" font-style="italic" font-size="8.6" fill="#ee5535" textLength="58" lengthAdjust="spacingAndGlyphs">Ymfxz.com</text><rect x="81.5" y="4.7" width="11.5" height="4.8" fill="#ea6a44"/><text x="23.5" y="23.4" font-family="Liberation Sans" style="font-weight:900" font-size="14" fill="url(#wmg)" stroke="url(#wmg)" stroke-width="0.1" textLength="70" lengthAdjust="spacingAndGlyphs">源码分享站</text></svg>
<svg style="left:655.5px;top:342.7px;z-index:5" width="96" height="27" viewBox="0 0 96 27"><circle cx="8.2" cy="7.8" r="1.1" fill="#f0583a"/><circle cx="11.8" cy="8.8" r="1.1" fill="#f0583a"/><circle cx="14.8" cy="9.4" r="1.1" fill="#f0583a"/><circle cx="17.8" cy="10.2" r="1.1" fill="#f0583a"/><circle cx="12.6" cy="11.8" r="1.2" fill="#f0583a"/><circle cx="15.6" cy="12.4" r="1.2" fill="#f0583a"/><circle cx="18.6" cy="13.2" r="1.2" fill="#f0583a"/><circle cx="13.4" cy="15.2" r="1.3" fill="#f0583a"/><circle cx="16.8" cy="15.6" r="1.3" fill="#f0583a"/><circle cx="19.8" cy="16.2" r="1.3" fill="#f0583a"/><circle cx="21.0" cy="19.6" r="1.4" fill="#f0583a"/><circle cx="5.2" cy="10.2" r="1.2" fill="#2aa6e2"/><circle cx="9.2" cy="11.0" r="1.2" fill="#2aa6e2"/><circle cx="5.8" cy="13.8" r="1.3" fill="#2aa6e2"/><circle cx="9.8" cy="14.5" r="1.3" fill="#2aa6e2"/><circle cx="6.4" cy="18.0" r="1.5" fill="#1582c8"/><circle cx="10.4" cy="18.5" r="1.4" fill="#1582c8"/><circle cx="14.2" cy="18.8" r="1.3" fill="#1582c8"/><circle cx="17.8" cy="19.0" r="1.2" fill="#1582c8"/><circle cx="6.6" cy="22.6" r="1.6" fill="#0d5a9e"/><circle cx="11.2" cy="22.8" r="1.5" fill="#0d5a9e"/><circle cx="15.2" cy="23.0" r="1.4" fill="#0d5a9e"/><circle cx="19.0" cy="23.2" r="1.2" fill="#0d5a9e"/><text x="23" y="9.9" font-family="Liberation Sans" font-style="italic" font-size="8.6" fill="#ee5535" textLength="58" lengthAdjust="spacingAndGlyphs">Ymfxz.com</text><rect x="81.5" y="4.7" width="11.5" height="4.8" fill="#ea6a44"/><text x="23.5" y="23.4" font-family="Liberation Sans" style="font-weight:900" font-size="14" fill="url(#wmg)" stroke="url(#wmg)" stroke-width="0.1" textLength="70" lengthAdjust="spacingAndGlyphs">源码分享站</text></svg>
<svg style="left:161.1px;top:574.8px;z-index:5" width="96" height="27" viewBox="0 0 96 27"><circle cx="8.2" cy="7.8" r="1.1" fill="#f0583a"/><circle cx="11.8" cy="8.8" r="1.1" fill="#f0583a"/><circle cx="14.8" cy="9.4" r="1.1" fill="#f0583a"/><circle cx="17.8" cy="10.2" r="1.1" fill="#f0583a"/><circle cx="12.6" cy="11.8" r="1.2" fill="#f0583a"/><circle cx="15.6" cy="12.4" r="1.2" fill="#f0583a"/><circle cx="18.6" cy="13.2" r="1.2" fill="#f0583a"/><circle cx="13.4" cy="15.2" r="1.3" fill="#f0583a"/><circle cx="16.8" cy="15.6" r="1.3" fill="#f0583a"/><circle cx="19.8" cy="16.2" r="1.3" fill="#f0583a"/><circle cx="21.0" cy="19.6" r="1.4" fill="#f0583a"/><circle cx="5.2" cy="10.2" r="1.2" fill="#2aa6e2"/><circle cx="9.2" cy="11.0" r="1.2" fill="#2aa6e2"/><circle cx="5.8" cy="13.8" r="1.3" fill="#2aa6e2"/><circle cx="9.8" cy="14.5" r="1.3" fill="#2aa6e2"/><circle cx="6.4" cy="18.0" r="1.5" fill="#1582c8"/><circle cx="10.4" cy="18.5" r="1.4" fill="#1582c8"/><circle cx="14.2" cy="18.8" r="1.3" fill="#1582c8"/><circle cx="17.8" cy="19.0" r="1.2" fill="#1582c8"/><circle cx="6.6" cy="22.6" r="1.6" fill="#0d5a9e"/><circle cx="11.2" cy="22.8" r="1.5" fill="#0d5a9e"/><circle cx="15.2" cy="23.0" r="1.4" fill="#0d5a9e"/><circle cx="19.0" cy="23.2" r="1.2" fill="#0d5a9e"/><text x="23" y="9.9" font-family="Liberation Sans" font-style="italic" font-size="8.6" fill="#ee5535" textLength="58" lengthAdjust="spacingAndGlyphs">Ymfxz.com</text><rect x="81.5" y="4.7" width="11.5" height="4.8" fill="#ea6a44"/><text x="23.5" y="23.4" font-family="Liberation Sans" style="font-weight:900" font-size="14" fill="url(#wmg)" stroke="url(#wmg)" stroke-width="0.1" textLength="70" lengthAdjust="spacingAndGlyphs">源码分享站</text></svg>
<svg style="left:917.4px;top:562.8px;z-index:5" width="96" height="27" viewBox="0 0 96 27"><circle cx="8.2" cy="7.8" r="1.1" fill="#f0583a"/><circle cx="11.8" cy="8.8" r="1.1" fill="#f0583a"/><circle cx="14.8" cy="9.4" r="1.1" fill="#f0583a"/><circle cx="17.8" cy="10.2" r="1.1" fill="#f0583a"/><circle cx="12.6" cy="11.8" r="1.2" fill="#f0583a"/><circle cx="15.6" cy="12.4" r="1.2" fill="#f0583a"/><circle cx="18.6" cy="13.2" r="1.2" fill="#f0583a"/><circle cx="13.4" cy="15.2" r="1.3" fill="#f0583a"/><circle cx="16.8" cy="15.6" r="1.3" fill="#f0583a"/><circle cx="19.8" cy="16.2" r="1.3" fill="#f0583a"/><circle cx="21.0" cy="19.6" r="1.4" fill="#f0583a"/><circle cx="5.2" cy="10.2" r="1.2" fill="#2aa6e2"/><circle cx="9.2" cy="11.0" r="1.2" fill="#2aa6e2"/><circle cx="5.8" cy="13.8" r="1.3" fill="#2aa6e2"/><circle cx="9.8" cy="14.5" r="1.3" fill="#2aa6e2"/><circle cx="6.4" cy="18.0" r="1.5" fill="#1582c8"/><circle cx="10.4" cy="18.5" r="1.4" fill="#1582c8"/><circle cx="14.2" cy="18.8" r="1.3" fill="#1582c8"/><circle cx="17.8" cy="19.0" r="1.2" fill="#1582c8"/><circle cx="6.6" cy="22.6" r="1.6" fill="#0d5a9e"/><circle cx="11.2" cy="22.8" r="1.5" fill="#0d5a9e"/><circle cx="15.2" cy="23.0" r="1.4" fill="#0d5a9e"/><circle cx="19.0" cy="23.2" r="1.2" fill="#0d5a9e"/><text x="23" y="9.9" font-family="Liberation Sans" font-style="italic" font-size="8.6" fill="#ee5535" textLength="58" lengthAdjust="spacingAndGlyphs">Ymfxz.com</text><rect x="81.5" y="4.7" width="11.5" height="4.8" fill="#ea6a44"/><text x="23.5" y="23.4" font-family="Liberation Sans" style="font-weight:900" font-size="14" fill="url(#wmg)" stroke="url(#wmg)" stroke-width="0.1" textLength="70" lengthAdjust="spacingAndGlyphs">源码分享站</text></svg>
</body></html>
